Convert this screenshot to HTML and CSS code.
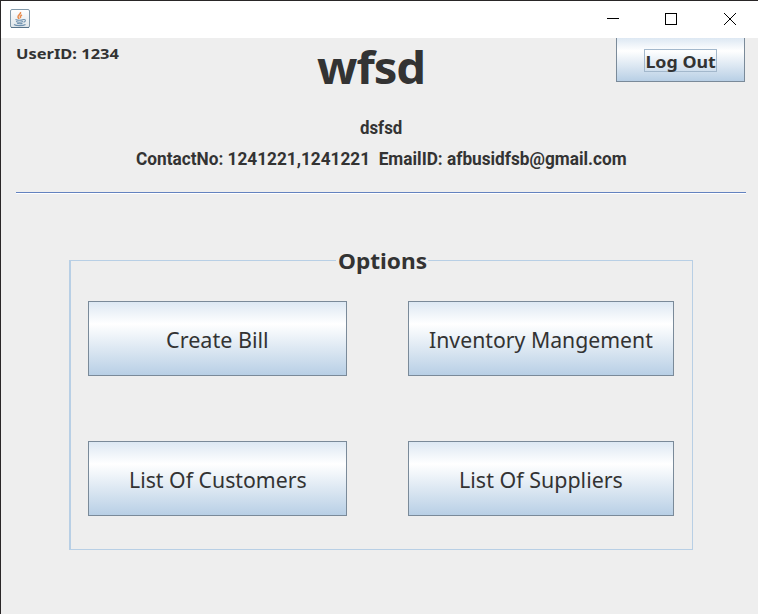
FILE: index.html
```html
<!DOCTYPE html>
<html lang="en">
<head>
<meta charset="utf-8">
<title>wfsd</title>
<link rel="stylesheet" href="styles.css">
</head>
<body>
<div class="window">
  <header class="titlebar">
    <svg class="app-icon" width="20" height="20" viewBox="0 0 20 20">
      <defs><linearGradient id="g" x1="0" y1="0" x2="0" y2="1"><stop offset="0" stop-color="#fff"/><stop offset="1" stop-color="#dfe5e9"/></linearGradient></defs>
      <rect x=".5" y=".5" width="19" height="18" rx="1.5" fill="url(#g)" stroke="#8299aa"/>
      <path d="M1 18.5h18" stroke="#587389"/>
      <path d="M10.500 3c1 2-3 3-2.500 5 .2 1 1 1.500 1 2M12 6c-2 1-2 2-1.200 3" fill="none" stroke="#e98b4c" stroke-width="1.500"/>
      <path d="M5.500 10.500c2 .8 6 .8 8 0M6 12.500c2 .8 5 .8 7 0M7 14.300c2 .6 4 .6 5.500 0M13.500 10.500c2.500-.5 2.500 2 0 2.800M4 15.500c2 1.500 9 1.500 11.500 0" fill="none" stroke="#6f91ae" stroke-width="1.100"/>
    </svg>
    <svg class="controls" width="138" height="37" viewBox="620 1 138 37" fill="none" stroke="#000" shape-rendering="crispEdges">
      <path d="M607 18.500h12"/>
      <path d="M665.500 13.500h11v11h-11z"/>
      <path d="M724 13l12 12M736 13l-12 12" shape-rendering="auto"/>
    </svg>
  </header>
  <main class="content">
    <section class="top">
      <div class="user"><span class="t-user">UserID: 1234</span></div>
      <h1><span class="t-title">wfsd</span></h1>
      <button class="btn logout"><span class="focus"><span class="t-logout">Log Out</span></span></button>
    </section>
    <p class="line sub"><span class="t-sub">dsfsd</span></p>
    <p class="line contact"><span class="t-contact">ContactNo: 1241221,1241221&nbsp; EmailID: afbusidfsb@gmail.com</span></p>
    <hr>
    <fieldset>
      <legend><span class="t-options">Options</span></legend>
      <div class="grid">
        <button class="btn"><span class="t-create">Create Bill</span></button>
        <button class="btn"><span class="t-inventory">Inventory Mangement</span></button>
        <button class="btn"><span class="t-customers">List Of Customers</span></button>
        <button class="btn"><span class="t-suppliers">List Of Suppliers</span></button>
      </div>
    </fieldset>
  </main>
</div>
</body>
</html>
```
FILE: styles.css
```css
* { box-sizing: border-box; }
body { margin: 0; color: #333; font-family: "Noto Sans", sans-serif; }
.window { width: 758px; height: 614px; overflow: hidden; background: #eee; border-top: 1px solid #292627; border-left: 1px solid #292627; }
.titlebar { height: 37px; background: #fff; display: flex; justify-content: space-between; padding: 8px 0 0 9px; }
.controls { margin-top: -8px; overflow: visible; }
span { display: inline-block; white-space: nowrap; }
.top { display: grid; grid-template-columns: 240px 1fr 130px; padding: 0 12px 0 15px; height: 72px; }
.user { font-size: 14.500px; font-weight: 700; line-height: 20px; padding-top: 5px; }
.t-user { transform: scaleX(1.135); transform-origin: left; }
h1 { margin: 0; font-size: 45px; line-height: 60px; letter-spacing: -1px; padding-left: 61px; margin-top: -1px; }
.t-title { transform: scaleX(1.05); transform-origin: left; }
.btn { font: 22px "Noto Sans", sans-serif; color: #333; border: 1px solid #7a8a99; border-radius: 0; padding: 1px 0 0; background: linear-gradient(#dde8f3 0%, #fff 30%, #b8cfe5 100%); }
.logout { height: 44px; width: 129px; border-top: 0; padding: 2px 0 0; font-size: 16.500px; font-weight: 700; }
.t-logout { transform: scaleX(1.08); }
.focus { border: 1px solid #a3b8cc; width: 73px; height: 23px; line-height: 23px; }
.line { margin: 0; font: 700 18px/30px Roboto, sans-serif; }
.sub { padding: 3px 0 0 359px; }
.contact { padding: 1px 0 0 135px; }
.t-sub { transform: scaleX(.935); transform-origin: left; }
.t-contact { transform: scaleX(.957); transform-origin: left; }
hr { margin: 18px 12px 0 15px; border: 0; border-top: 1px solid #6382bf; border-bottom: 1px solid #fff; }
fieldset { margin: 52px 65px 0 68px; height: 304px; padding: 0; border: 1px solid #b8cfe5; border-left-width: 2px; min-width: 0; }
legend { font-size: 22px; font-weight: 700; line-height: 28px; padding: 0; width: 92px; margin-left: 265px; padding-left: 2px; white-space: nowrap; }
.t-options { transform: scaleX(1.03); transform-origin: left; }
.grid { display: grid; grid-template-columns: 259px 266px; grid-template-rows: 75px 75px; column-gap: 61px; row-gap: 65px; padding: 27px 0 0 17px; }
.t-create { transform: scaleX(.98); }
.t-inventory { transform: scaleX(.965); }
.t-customers { transform: scaleX(.967); }
.t-suppliers { transform: scaleX(.975); }
```
